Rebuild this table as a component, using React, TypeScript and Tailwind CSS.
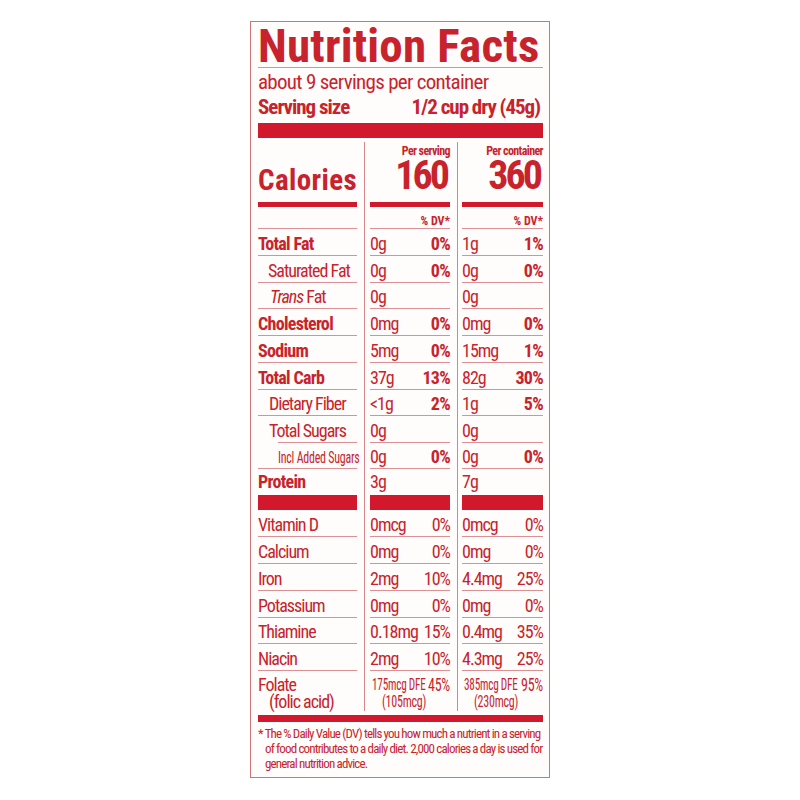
import type { ReactNode } from "react";

type Val = { amt: string; dv?: string; bold?: boolean };
type Nutrient = {
  h: string;
  label: ReactNode;
  labelClass: string;
  s: Val;
  c: Val;
  line?: boolean;
  indentLine?: boolean;
};

const B = "font-bold tracking-[-0.7px]";
const R = "tracking-[-1px]";

const top: Nutrient[] = [
  { h: "h-[27px]", label: "Total Fat", labelClass: B, s: { amt: "0g", dv: "0%", bold: true }, c: { amt: "1g", dv: "1%", bold: true } },
  { h: "h-[27px]", label: "Saturated Fat", labelClass: `${R} pl-[10px]`, s: { amt: "0g", dv: "0%", bold: true }, c: { amt: "0g", dv: "0%", bold: true } },
  { h: "h-[26px]", label: <><i>Trans</i> Fat</>, labelClass: `${R} pl-[12px]`, s: { amt: "0g" }, c: { amt: "0g" } },
  { h: "h-[27px]", label: "Cholesterol", labelClass: B, s: { amt: "0mg", dv: "0%", bold: true }, c: { amt: "0mg", dv: "0%", bold: true } },
  { h: "h-[27px]", label: "Sodium", labelClass: B, s: { amt: "5mg", dv: "0%", bold: true }, c: { amt: "15mg", dv: "1%", bold: true } },
  { h: "h-[27px]", label: "Total Carb", labelClass: B, s: { amt: "37g", dv: "13%", bold: true }, c: { amt: "82g", dv: "30%", bold: true } },
  { h: "h-[26px]", label: "Dietary Fiber", labelClass: `${R} pl-[11px]`, s: { amt: "<1g", dv: "2%", bold: true }, c: { amt: "1g", dv: "5%", bold: true } },
  { h: "h-[27px]", label: "Total Sugars", labelClass: `${R} pl-[11px]`, s: { amt: "0g" }, c: { amt: "0g" }, indentLine: true },
  {
    h: "h-[26px]",
    label: <span className="inline-block origin-left scale-x-[0.7] text-[17px]">Incl Added Sugars</span>,
    labelClass: "pl-[20px] tracking-[-0.3px]",
    s: { amt: "0g", dv: "0%", bold: true },
    c: { amt: "0g", dv: "0%", bold: true },
  },
  { h: "h-[26px]", label: "Protein", labelClass: B, s: { amt: "3g" }, c: { amt: "7g" }, line: false },
];

const vitamins: Nutrient[] = [
  { h: "h-[27px]", label: "Vitamin D", labelClass: R, s: { amt: "0mcg", dv: "0%" }, c: { amt: "0mcg", dv: "0%" } },
  { h: "h-[27px]", label: "Calcium", labelClass: R, s: { amt: "0mg", dv: "0%" }, c: { amt: "0mg", dv: "0%" } },
  { h: "h-[27px]", label: "Iron", labelClass: R, s: { amt: "2mg", dv: "10%" }, c: { amt: "4.4mg", dv: "25%" } },
  { h: "h-[27px]", label: "Potassium", labelClass: R, s: { amt: "0mg", dv: "0%" }, c: { amt: "0mg", dv: "0%" } },
  { h: "h-[26px]", label: "Thiamine", labelClass: R, s: { amt: "0.18mg", dv: "15%" }, c: { amt: "0.4mg", dv: "35%" } },
  { h: "h-[27px]", label: "Niacin", labelClass: R, s: { amt: "2mg", dv: "10%" }, c: { amt: "4.3mg", dv: "25%" } },
];

function Divider() {
  return <div className="w-px self-stretch bg-[#d9868a]" />;
}

// three columns with the two vertical rules between them
function Tri({ h, left, mid, right, cell = "" }: { h: string; left: ReactNode; mid: ReactNode; right: ReactNode; cell?: string }) {
  return (
    <div className={`flex ${h}`}>
      <div className={`w-[99px] ${cell}`}>{left}</div>
      <div className="w-[7px]" />
      <Divider />
      <div className="w-[5px]" />
      <div className={`w-[80px] ${cell}`}>{mid}</div>
      <div className="w-[7px]" />
      <Divider />
      <div className="w-[4px]" />
      <div className={`w-[81px] ${cell}`}>{right}</div>
    </div>
  );
}

function Amount({ v, line, pb }: { v: Val; line: boolean; pb: string }) {
  return (
    <div className={`flex h-full items-end justify-between whitespace-nowrap border-b ${line ? "border-[#dc9094]" : "border-transparent"} ${pb} text-[18px] leading-[18px]`}>
      <span className="tracking-[-1px]">{v.amt}</span>
      {v.dv && <span className={v.bold ? "font-bold tracking-[-0.7px]" : "tracking-[-1px]"}>{v.dv}</span>}
    </div>
  );
}

function NutrientRow({ n }: { n: Nutrient }) {
  const line = n.line !== false;
  const pb = line ? "pb-[2px]" : "pb-[3px]";
  const left = n.indentLine ? (
    <div className="flex h-full flex-col">
      <div className={`flex flex-1 items-end whitespace-nowrap ${pb} text-[18px] leading-[18px] ${n.labelClass}`}>
        <span>{n.label}</span>
      </div>
      <div className="ml-[20px] h-px bg-[#dc9094]" />
    </div>
  ) : (
    <div className={`flex h-full items-end whitespace-nowrap border-b ${line ? "border-[#dc9094]" : "border-transparent"} ${pb} text-[18px] leading-[18px] ${n.labelClass}`}>
      <span>{n.label}</span>
    </div>
  );
  return <Tri h={n.h} left={left} mid={<Amount v={n.s} line={line} pb={pb} />} right={<Amount v={n.c} line={line} pb={pb} />} />;
}

function Folate({ amt, dv, sub }: { amt: string; dv: string; sub: string }) {
  return (
    <div className="flex flex-col whitespace-nowrap pt-[5px]">
      <div className="flex h-[17px] items-end leading-[17px]">
        <span className="min-w-0 flex-1 pl-[2px]">
          <span className="inline-block origin-left scale-x-[0.7] text-[16px] tracking-[-0.3px]">{amt}</span>
        </span>
        <span className="inline-block shrink-0 origin-right scale-x-[0.78] text-[18px] tracking-[-0.5px]">{dv}</span>
      </div>
      <div className="h-[17px] pl-[12px] leading-[17px]">
        <span className="inline-block origin-left scale-x-[0.75] text-[16px] tracking-[-0.3px]">{sub}</span>
      </div>
    </div>
  );
}

function PerCol({ title, value }: { title: string; value: string }) {
  return (
    <div className="flex flex-col items-end whitespace-nowrap pt-[3px] font-bold">
      <span className="text-[12px] leading-[13px] tracking-[-0.6px]">{title}</span>
      <span className="mt-[1px] pr-[3px] text-[40px] leading-[34px] tracking-[-3px]">{value}</span>
    </div>
  );
}

function DvHead() {
  return <div className="flex h-full items-end justify-end pb-[1px] text-[12px] font-bold leading-[12px]">% DV*</div>;
}

export default function App() {
  return (
    <div className="flex h-[800px] w-[800px] justify-center bg-white pt-[21px] font-['Roboto_Condensed','Liberation_Sans',sans-serif] text-[#c8232c]">
      <div className="h-[757px] w-[300px] border border-[#cf7478] bg-[#fffdfb] pl-[7px] pr-[6px] pt-[2px]">
        {/* header */}
        <div className="h-[43px] whitespace-nowrap text-[47px] font-bold leading-[44px] tracking-[0.2px]">Nutrition Facts</div>
        <div className="h-px bg-[#dc9094]" />
        <div className="mt-[2px] whitespace-nowrap text-[21px] leading-[24px] tracking-[-0.7px]">about 9 servings per container</div>
        <div className="mt-[1px] flex justify-between whitespace-nowrap text-[21px] font-bold leading-[24px] tracking-[-1px]">
          <span>Serving size</span>
          <span className="pr-[3px]">1/2 cup dry (45g)</span>
        </div>
        <div className="mt-[4px] h-[15px] bg-[#d2182c]" />

        {/* calories */}
        <div className="mt-[4px]">
          <Tri
            h="h-[60px]"
            left={<div className="flex h-full items-end pb-[7px] text-[29px] font-bold leading-[29px] tracking-[0.4px]">Calories</div>}
            mid={<PerCol title="Per serving" value="160" />}
            right={<PerCol title="Per container" value="360" />}
          />
          <Tri h="h-[5px]" cell="bg-[#d2182c]" left={null} mid={null} right={null} />
          <Tri h="h-[22px]" cell="border-b border-[#dc9094]" left={null} mid={<DvHead />} right={<DvHead />} />
          {top.map((n, i) => (
            <NutrientRow key={i} n={n} />
          ))}
          <Tri h="h-[15px]" cell="bg-[#d2182c]" left={null} mid={null} right={null} />
          {vitamins.map((n, i) => (
            <NutrientRow key={i} n={n} />
          ))}
          <Tri
            h="h-[40px]"
            left={
              <div className="flex flex-col whitespace-nowrap pt-[5px] text-[18px] leading-[17px] tracking-[-1px]">
                <span>Folate</span>
                <span className="pl-[11px]">(folic acid)</span>
              </div>
            }
            mid={<Folate amt="175mcg DFE" dv="45%" sub="(105mcg)" />}
            right={<Folate amt="385mcg DFE" dv="95%" sub="(230mcg)" />}
          />
        </div>

        {/* footnote */}
        <div className="mt-[4px] h-[7px] bg-[#d2182c]" />
        <div className="mt-[4px] whitespace-nowrap text-[13px] leading-[15px] tracking-[-0.85px]">
          <p>* The % Daily Value (DV) tells you how much a nutrient in a serving</p>
          <p className="pl-[7px]">of food contributes to a daily diet. 2,000 calories a day is used for</p>
          <p className="pl-[7px]">general nutrition advice.</p>
        </div>
      </div>
    </div>
  );
}
